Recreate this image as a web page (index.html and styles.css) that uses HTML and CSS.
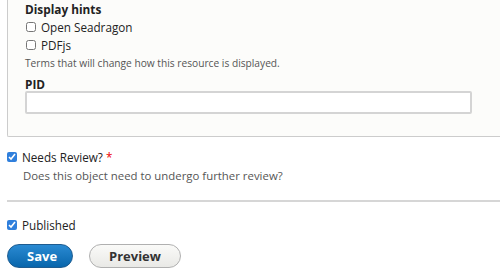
FILE: index.html
```html
<!DOCTYPE html>
<html lang="en">

<head>
    <meta charset="UTF-8">
    <meta name="viewport" content="width=device-width, initial-scale=1.0">
    <title>Edit resource</title>
    <link rel="stylesheet" href="styles.css">
</head>

<body>
    <form class="node-form">
        <div class="fieldset">
            <div class="form-item">
                <label class="form-label">Display hints</label>
                <div class="checkbox-row">
                    <input type="checkbox" id="hint_osd">
                    <label for="hint_osd">Open Seadragon</label>
                </div>
                <div class="checkbox-row">
                    <input type="checkbox" id="hint_pdfjs">
                    <label for="hint_pdfjs">PDFjs</label>
                </div>
                <div class="description small">Terms that will change how this resource is displayed.</div>
            </div>

            <div class="form-item">
                <label class="form-label pid-label" for="pid">PID</label>
                <input type="text" id="pid" class="form-text">
            </div>
        </div>

        <div class="form-item review">
            <div class="checkbox-row">
                <input type="checkbox" id="needs_review" checked>
                <label for="needs_review">Needs Review? <span class="required">*</span></label>
            </div>
            <div class="description">Does this object need to undergo further review?</div>
        </div>

        <div class="form-item publish">
            <div class="checkbox-row">
                <input type="checkbox" id="published" checked>
                <label for="published">Published</label>
            </div>
        </div>

        <div class="actions">
            <button type="submit" class="button button-primary">Save</button>
            <button type="button" class="button">Preview</button>
        </div>
    </form>
</body>

</html>
```

FILE: styles.css
```css
body {
    margin: 0;
    background: #fff;
    color: #222;
    font-family: "Open Sans", "DejaVu Sans", sans-serif;
    font-size: 12px;
    overflow: hidden;
}

.node-form {
    padding-left: 7px;
}

.fieldset {
    background: #fcfcfa;
    border: 1px solid #ccc;
    border-top: none;
    border-right: none;
    border-radius: 0 0 0 2px;
    padding: 0 28px 22px 17px;
    margin-right: -20px;
}

.form-item {
    margin: 0;
}

.form-label {
    display: block;
    font-weight: bold;
    font-size: 11.8px;
    line-height: 18px;
}

.pid-label {
    margin-top: 3px;
    line-height: 14px;
}

.checkbox-row {
    display: flex;
    align-items: center;
    height: 18px;
}

.checkbox-row input {
    width: 10px;
    height: 10px;
    margin: 0 5px 0 1px;
    accent-color: #2f7fdc;
}

.checkbox-row label {
    font-size: 11.7px;
}

.description {
    color: #555;
    font-size: 11.4px;
    line-height: 18px;
}

.description.small {
    font-size: 10.2px;
}

.fieldset .form-item + .form-item {
    margin-top: 5px;
}

.form-text {
    display: block;
    box-sizing: border-box;
    width: 447px;
    height: 23px;
    border: 2px solid #d4d4d4;
    border-radius: 2px;
    background: #fff;
}

.review {
    margin-top: 11px;
    padding-bottom: 15px;
    border-bottom: 2px solid #d6d6d6;
}

.review .checkbox-row input {
    margin-left: 0;
}

.review .description {
    padding-left: 16px;
    margin-top: 1px;
}

.required {
    color: #e00;
}

.publish {
    margin-top: 14px;
}

.publish .checkbox-row input {
    margin-left: 0;
}

.actions {
    display: flex;
    gap: 16px;
    margin-top: 10px;
}

.button {
    box-sizing: border-box;
    height: 24px;
    padding: 0 19px;
    border-radius: 20px;
    border: 1px solid #b0b0b0;
    background: linear-gradient(#fafaf8, #e9e9e6);
    color: #333;
    font-family: "Open Sans", "DejaVu Sans", sans-serif;
    font-size: 13px;
    font-weight: bold;
}

.button-primary {
    width: 66px;
    border-color: #1e5c90;
    background: linear-gradient(#2a8ad2, #0866ac);
    color: #fff;
}
```
